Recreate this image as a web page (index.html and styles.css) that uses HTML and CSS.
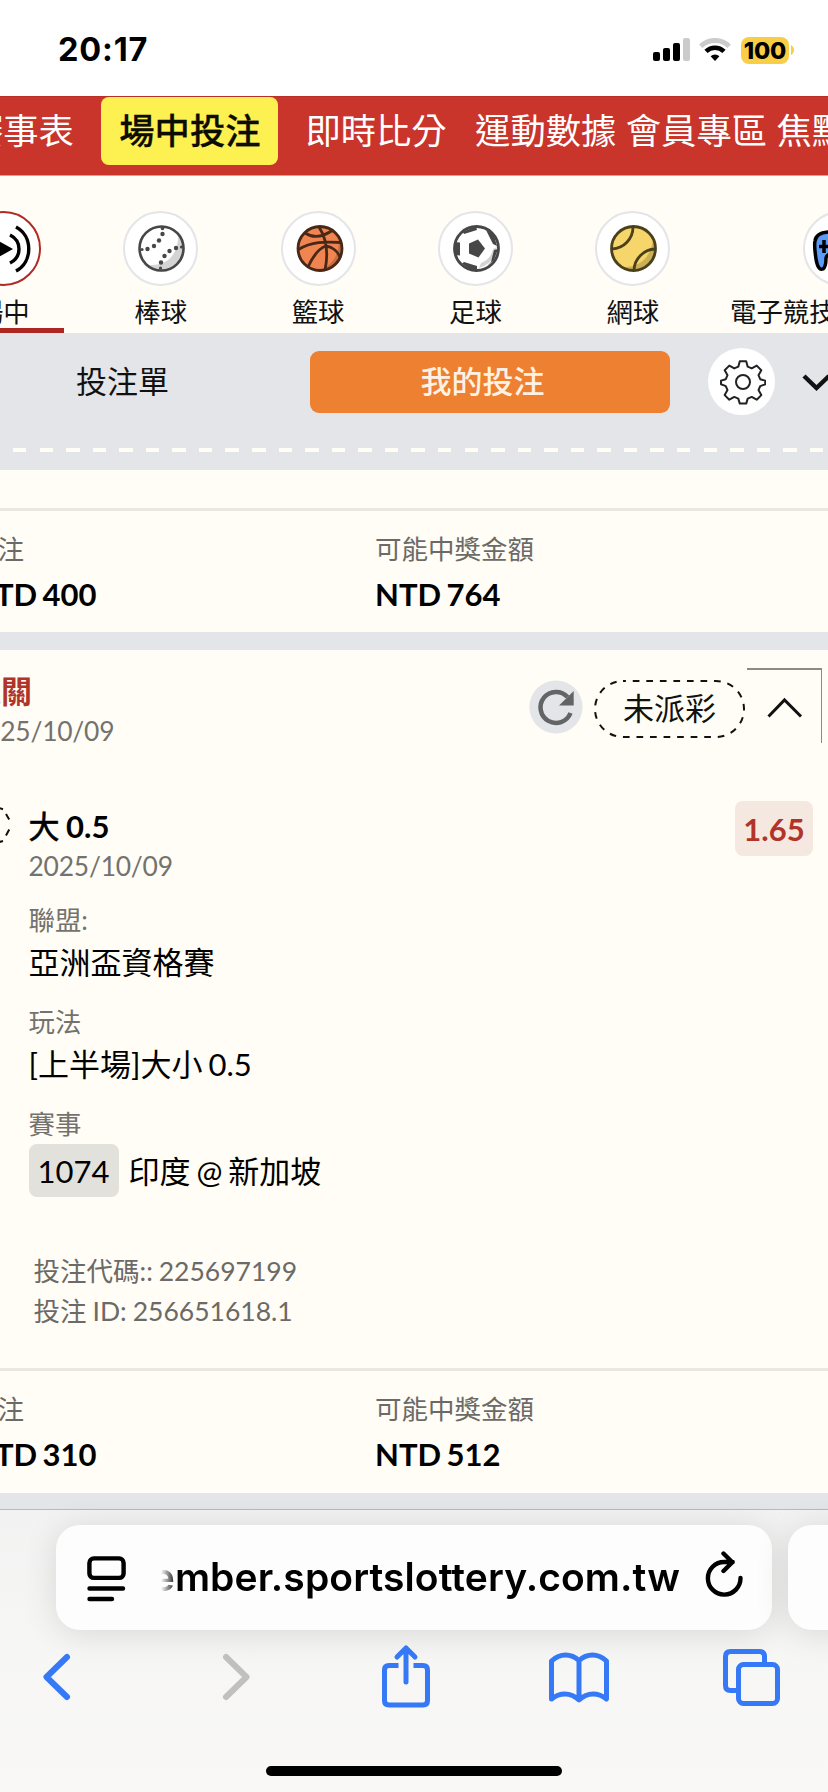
FILE: index.html
```html
<!DOCTYPE html>
<html lang="zh-Hant">
<head>
<meta charset="utf-8">
<title>場中投注</title>
<link rel="stylesheet" href="styles.css">
</head>
<body>
<div class="screen">
  <header class="status">
    <span class="time">20:17</span>
    <div class="status-icons">
      <svg class="signal" width="37" height="24" viewBox="0 0 37 24"><rect x="0" y="14" width="7" height="9" rx="2"/><rect x="10" y="10" width="7" height="13" rx="2"/><rect x="20" y="5" width="7" height="18" rx="2"/><rect x="30" y="0" width="7" height="23" rx="2" fill="#cbcbcb"/></svg>
      <svg class="wifi" width="32" height="24" viewBox="0 0 32 24" fill="none"><path d="M1.8 8.2a20.5 20.5 0 0 1 28.4 0" stroke="#cbcbcb" stroke-width="5"/><path d="M7 13.4a13 13 0 0 1 18 0" stroke="#000" stroke-width="4.6"/><path d="M11.6 18.2a6.4 6.4 0 0 1 8.8 0L16 23z" fill="#000"/></svg>
      <div class="battery"><span>100</span></div>
      <svg width="3" height="10" viewBox="0 0 3 10"><path d="M0 0c4 2 4 8 0 10z" fill="#f8ce46"/></svg>
    </div>
  </header>

  <nav class="nav">
    <span class="nav-item schedule">賽事表</span>
    <span class="nav-item active">場中投注</span>
    <span class="nav-item live">即時比分</span>
    <span class="nav-item stats">運動數據</span>
    <span class="nav-item member">會員專區</span>
    <span class="nav-item focus">焦點</span>
  </nav>

  <section class="sports">
    <div class="sport selected"><div class="disc">
      <svg width="75" height="75" viewBox="-34 211 75 75" fill="none" stroke="#000" stroke-width="3.4"><path d="M-10 236v26l23-13z" fill="#000" stroke="none"/><path d="M10 235c12 6 12 22 0 28M16 227c17 9 17 35 0 44"/></svg></div>
      <span class="sport-name">場中</span></div>
    <div class="sport"><div class="disc">
      <svg width="75" height="75" viewBox="0 0 75 75" fill="none"><circle cx="38.5" cy="37.500" r="21.500" fill="#fff"/><path d="M55 20a22 22 0 0 1-35 33c22 5 37-8 35-33z" fill="#d4d4d4"/><circle cx="38.500" cy="37.500" r="22" stroke="#474747" stroke-width="2.600"/><g fill="#474747"><circle cx="39.500" cy="17.500" r="1.800"/><circle cx="39.500" cy="23" r="2.200"/><circle cx="36" cy="29.500" r="2.200"/><circle cx="31" cy="35" r="2.200"/><circle cx="24.500" cy="38" r="2.200"/><circle cx="19" cy="38.500" r="1.600"/><circle cx="58.500" cy="36" r="1.600"/><circle cx="53" cy="37" r="2.200"/><circle cx="46.500" cy="40" r="2.200"/><circle cx="41.500" cy="45" r="2.200"/><circle cx="38" cy="51.500" r="2.200"/><circle cx="37.500" cy="57" r="1.600"/></g></svg></div>
      <span class="sport-name">棒球</span></div>
    <div class="sport"><div class="disc">
      <svg width="75" height="75" viewBox="0 0 75 75" fill="none" stroke="#482817" stroke-width="2.800"><circle cx="39" cy="37.500" r="21.800" fill="#f08551" stroke="none"/><path d="M58 26a22 22 0 0 1-26 33c16 0 27-12 26-33z" fill="#ca6d40" stroke="none"/><circle cx="39" cy="37.500" r="22"/><path d="M24 22c9 6 18 4 28-3M17.500 38.500c13-8 26-8 43-7M38 16c9 14 9 29 6 43M27 56c5-11 12-19 18-21 7 1 12 6 14 11"/></svg></div>
      <span class="sport-name">籃球</span></div>
    <div class="sport"><div class="disc">
      <svg width="75" height="75" viewBox="0 0 75 75"><circle cx="38.500" cy="37.500" r="21.500" fill="#fff"/><path d="M59 36q-2 16-18 21l2-5q10-4 12-14z" fill="#d4d4d4"/><circle cx="38.500" cy="37.500" r="22" fill="none" stroke="#474747" stroke-width="2.800"/><g fill="#474747"><path d="M31 32.500l9-4 7 9-6.500 9L31 42.500z"/><path d="M25 21l13-6 1 4-13 4zM48 19l8 5 3 11-4-2zM53 51l3-12 4-1-4 11-8 7zM26 51l13 4v4l-7-.5-8-6zM16 31l6 .5v13l-5-.5z"/></g></svg></div>
      <span class="sport-name">足球</span></div>
    <div class="sport"><div class="disc">
      <svg width="75" height="75" viewBox="0 0 75 75" fill="none"><circle cx="38.500" cy="37.500" r="21.800" fill="#f6d66a"/><path d="M58 27a22 22 0 0 1-30 29c17 1 29-11 30-29z" fill="#cbb055"/><path d="M17 38a22 22 0 0 0 21-22M39 59a22 22 0 0 1 21-21" stroke="#4a401b" stroke-width="2.800"/><circle cx="38.500" cy="37.500" r="22" stroke="#4a401b" stroke-width="2.800"/></svg></div>
      <span class="sport-name">網球</span></div>
    <div class="sport esports"><div class="disc">
      <svg width="75" height="75" viewBox="0 0 75 75" fill="#5b9cf8" stroke="#000"><path d="M25 21h25q10 0 12 12l3 20q1 8-5 6-5-2-7-12-2-4-7-4H29q-5 0-6 4 0 9-3 11-5 2-7-10-2-13-1-18 1-8 13-9z" stroke-width="3.500"/><path d="M21 29v13M16 35.500h12" stroke-width="3.500"/></svg></div>
      <span class="sport-name">電子競技</span></div>
  </section>

  <section class="slip-tabs">
    <div class="tab-row">
      <span class="tab">投注單</span>
      <span class="tab mine">我的投注</span>
      <div class="gear"><svg width="46" height="46" viewBox="0 0 46 46" fill="none" stroke="#222" stroke-width="2"><path d="M19.800 2.200h6.400l1.500 5.500 4 1.700 5-2.800 4.600 4.600-2.800 5 1.700 4 5 1.400v3.700l-5 1.800-1.700 4 2.800 5-4.600 4.600-5-2.800-4 1.700-1.500 5h-6.400l-1.500-5-4-1.700-5 2.800-4.600-4.600 2.800-5-1.700-4-4.800-1.800v-3.700l4.800-1.400 1.700-4-2.800-5 4.600-4.600 5 2.800 4-1.700z" stroke-linejoin="round"/><circle cx="23" cy="23" r="7"/></svg></div>
      <svg class="chev-down" width="30" height="20" viewBox="0 0 30 20" fill="none" stroke="#111" stroke-width="4.500"><path d="M2 3l12.500 12L27 3"/></svg>
    </div>
    <div class="dashes"></div>
  </section>

  <section class="card first">
    <div class="totals">
      <div class="total stake"><span class="label">投注</span><b class="amount">NTD 400</b></div>
      <div class="total"><span class="label">可能中獎金額</span><b class="amount">NTD 764</b></div>
    </div>
  </section>

  <section class="card">
    <div class="card-head">
      <div class="card-title"><b class="kind">過關</b><span class="date">2025/10/09</span></div>
      <svg class="refresh" width="54" height="54" viewBox="0 0 54 54"><circle cx="27" cy="27" r="26.600" fill="#e4e5e8"/><path d="M41.500 33A15.500 15.500 0 1 1 38.500 17" fill="none" stroke="#636466" stroke-width="4.500"/><path d="M44.700 11v14.500H30z" fill="#636466"/></svg>
      <div class="pill"><svg class="pill-line" width="151" height="58" viewBox="0 0 151 58" fill="none" stroke="#111" stroke-width="2"><rect x="1" y="1" width="149" height="56" rx="28" stroke-dasharray="6.700 6.850" stroke-dashoffset="3.800"/></svg><span>未派彩</span></div>
      <div class="toggle"><svg width="36" height="22" viewBox="0 0 36 22" fill="none" stroke="#111" stroke-width="3"><path d="M1.500 19.500L17.500 3l16.500 16.500"/></svg></div>
    </div>
    <div class="pick">
      <svg class="pick-ring" width="12" height="38" viewBox="0 0 12 38" fill="none" stroke="#111" stroke-width="2"><path d="M-1 2l4 1.200M6 8l3.200 5.500M9.200 23.500L6 29.500M3 35l-4 1.200"/></svg>
      <div class="pick-body">
        <div class="pick-name"><span class="han">大</span> 0.5</div>
        <div class="date">2025/10/09</div>
        <div class="field league">聯盟:</div><div class="value">亞洲盃資格賽</div>
        <div class="field">玩法</div><div class="value">[上半場]大小 0.5</div>
        <div class="field">賽事</div>
        <div class="match"><span class="code">1074</span><span>印度 @ 新加坡</span></div>
        <div class="ids"><div>投注代碼:: 225697199</div><div>投注 ID: 256651618.1</div></div>
      </div>
      <span class="odds">1.65</span>
    </div>
    <div class="totals">
      <div class="total stake"><span class="label">投注</span><b class="amount">NTD 310</b></div>
      <div class="total"><span class="label">可能中獎金額</span><b class="amount">NTD 512</b></div>
    </div>
  </section>

  <footer class="browser">
    <div class="address-row">
      <div class="address">
        <svg class="page-icon" width="39" height="46" viewBox="0 0 39 46" fill="none" stroke="#000" stroke-width="4.400" stroke-linecap="round"><rect x="2.400" y="2.400" width="34.200" height="19.500" rx="4.500"/><path d="M2.500 32.500h33.500M2.500 43h22.500"/></svg>
        <div class="url-clip"><span class="url">ember.sportslottery.com.tw</span></div>
        <svg class="reload" width="39" height="48" viewBox="0 0 39 48" fill="none" stroke="#000" stroke-width="4.400" stroke-linecap="round" stroke-linejoin="round"><path d="M35.500 27A16.300 16.300 0 1 1 19.200 11h8.500M18.500 2.500l8.800 8.700-8.800 8.800"/></svg>
      </div>
      <div class="next-tab"></div>
    </div>
    <div class="tools">
      <svg class="t-back" width="30" height="50" viewBox="0 0 30 50" fill="none" stroke="#3579f6" stroke-width="6" stroke-linecap="round" stroke-linejoin="round"><path d="M25 5L4.500 25 25 45"/></svg>
      <svg class="t-forward" width="30" height="50" viewBox="0 0 30 50" fill="none" stroke="#c0c0be" stroke-width="6" stroke-linecap="round" stroke-linejoin="round"><path d="M5 5l20.500 20L5 45"/></svg>
      <svg class="t-share" width="50" height="64" viewBox="0 0 50 64" fill="none" stroke="#3579f6" stroke-width="5" stroke-linecap="round" stroke-linejoin="round"><path d="M17.500 21.500H8q-4.500 0-4.500 4.500v30.500q0 4.500 4.500 4.500h34q4.500 0 4.500-4.500V26q0-4.500-4.500-4.500h-9.500" stroke-linecap="butt"/><path d="M25 38V4M16 13l9-9 9 9"/></svg>
      <svg class="t-book" width="60" height="52" viewBox="0 0 60 52" fill="none" stroke="#3579f6" stroke-width="5" stroke-linejoin="round"><path d="M30 8.500Q24 3 16.500 3T2.500 9v38q6-5 13.500-5T30 48q6.500-6 14-6t13.500 5V9Q51 3 43.500 3T30 8.500zV48"/></svg>
      <svg class="t-tabs" width="58" height="58" viewBox="0 0 58 58" fill="none" stroke="#3579f6" stroke-width="5"><path d="M41.500 13V7.500q0-5-5-5h-29q-5 0-5 5v29q0 5 5 5H14"/><rect x="15.500" y="15.500" width="39" height="39" rx="5"/></svg>
    </div>
    <div class="home-bar"></div>
  </footer>
</div>
</body>
</html>
```
FILE: styles.css
```css
* { box-sizing: border-box; }
body { margin: 0; }
svg { display: block; flex: none; }
.screen {
  width: 828px; height: 1792px; overflow: hidden;
  display: flex; flex-direction: column;
  background: #e4e5e8; color: #111;
  font: 31px/40px Lato, "Noto Sans CJK TC", sans-serif;
  font-variant-ligatures: none;
  word-spacing: -2px;
}

.status { height: 96px; flex: none; background: #fff; display: flex; justify-content: space-between; padding: 0 34px 0 58px; }
.time { font: 700 32.500px/40px Inter, sans-serif; letter-spacing: .8px; margin-top: 30px; color: #000; }
.status-icons { display: flex; align-items: center; height: 28px; margin-top: 36px; }
.wifi { margin-left: 9px; }
.battery { margin: 0 2px 0 10px; width: 48px; height: 27px; border-radius: 8px; background: #f8ce46; color: #000; font: 800 23.500px/27px Inter, sans-serif; text-align: center; letter-spacing: -.2px; }

.nav { height: 80px; flex: none; display: flex; background: #c9342b; border-bottom: 1px solid #e39a92; color: #fff; font-size: 35.300px; line-height: 67px; white-space: nowrap; border-top: 1px solid #b92f27; }
.nav-item { flex: none; height: 68px; }
.schedule { margin-left: -32px; }
.active { width: 177px; margin-left: 27.500px; text-align: center; border-radius: 8px; background: #fdf151; color: #0c0c00; font-weight: 500; -webkit-text-stroke: .3px #0c0c00; }
.live { margin-left: 27px; }
.stats { margin-left: 28.500px; }
.member, .focus { margin-left: 9.500px; }

.sports { height: 157px; flex: none; display: flex; background: #fffdf5; padding-top: 35px; margin-left: -75.300px; overflow: hidden; }
.sport { width: 157.400px; flex: none; display: flex; flex-direction: column; align-items: center; color: #111; }
.disc { width: 75px; height: 75px; flex: none; border-radius: 50%; background: #fff; border: 2px solid #e4e5e8; overflow: hidden; }
.disc svg { margin: -2px; }
.selected .disc { border-color: #b02a24; }
.sport-name { flex: none; font-size: 26.400px; line-height: 38px; padding-top: 7px; white-space: nowrap; }
.selected { border-bottom: 5px solid #ae2622; width: 139.300px; margin-right: 18px; padding-left: 18px; }
.esports { width: 220px; margin-left: 18.500px; align-items: flex-start; }
.esports .disc { margin-left: 72.500px; }

.slip-tabs { height: 137px; flex: none; padding-top: 15px; }
.tab-row { height: 67px; display: flex; align-items: center; }
.tab { width: 245px; text-align: center; flex: none; padding-bottom: 2px; }
.mine { margin-left: 64.500px; width: 360px; height: 62px; line-height: 61px; border-radius: 9px; background: #ed8031; color: #fff2e4; font-weight: 500; padding: 0 14px 0 0; }
.gear { width: 67px; height: 67px; flex: none; margin-left: 38px; border-radius: 50%; background: #fff; display: grid; place-items: center; padding-left: 3px; }
.chev-down { margin: 3px 0 0 27px; }
.dashes { height: 4px; margin: 33px 4px 0 13px; background: repeating-linear-gradient(90deg, #fffdf5 0 13.500px, transparent 13.500px 26.560px); }

.card { background: #fffdf5; flex: none; height: 843px; margin-bottom: 17px; }
.card.first { height: 162px; padding-top: 38px; margin-bottom: 18px; }
.totals { border-top: 3px solid #e9e8e2; display: flex; padding-top: 18px; }
.total { display: flex; flex-direction: column; white-space: nowrap; }
.stake { width: 404px; margin-left: -29px; flex: none; }
.label { font-size: 26.500px; color: #6b6a67; }
.amount { margin-top: 5px; color: #000; font-weight: 700; }
.date { font-size: 26.400px; color: #73726f; letter-spacing: -.2px; }

.card-head { height: 134px; display: flex; }
.card-title { width: 559px; margin-left: -30px; padding-top: 21px; display: flex; flex-direction: column; }
.kind { color: #b03427; }
.refresh { margin-top: 30px; }
.pill { position: relative; width: 151px; height: 58px; margin: 30px 0 0 11px; line-height: 56px; text-align: center; flex: none; }
.pill-line { position: absolute; inset: 0; }
.toggle { width: 75px; height: 75px; flex: none; margin: 18px 0 0 2px; border-top: 2px solid #8b8a83; border-right: 1px solid #8b8a83; padding: 27px 0 0 20px; }

.pick { display: flex; height: 584px; align-items: flex-start; white-space: nowrap; }
.pick-ring { margin-top: 22px; }
.pick-body { margin-left: 16.500px; padding-top: 22px; width: 706.500px; color: #000; }
.pick-name { font-weight: 700; word-spacing: -1px; }
.han { font-weight: 400; -webkit-text-stroke: .6px #000; }
.field { margin-top: 20px; font-size: 26.400px; color: #73726f; }
.league { margin-top: 14px; }
.value { margin-top: 2px; }
.match { display: flex; gap: 10px; line-height: 54px; }
.code { width: 90px; height: 53px; text-align: center; border-radius: 8px; background: #e3e1dc; }
.ids { margin: 53px 0 0 5px; font-size: 26.500px; color: #6b6a67; word-spacing: -.8px; }
.odds { width: 78px; height: 55px; margin-top: 17px; border-radius: 8px; background: #f5e8e0; color: #b03427; font-weight: 700; text-align: center; line-height: 56px; }

.browser { flex: none; height: 283px; margin-top: -1px; border-top: 1px solid #b9babc; background: linear-gradient(#f2f2f2, #f6f6f5 45%, #f9f8f6); }
.address-row { display: flex; gap: 16px; padding: 15px 0 0 56px; }
.address, .next-tab { height: 105px; border-radius: 24px; background: #fdfdfd; box-shadow: 0 4px 34px rgba(0, 0, 0, .12); flex: none; }
.address { width: 716px; display: flex; padding-left: 31px; }
.next-tab { width: 80px; }
.page-icon { margin-top: 31px; }
.url-clip { width: 519px; margin: 26px 0 0 35px; overflow: hidden; height: 56px; display: flex; justify-content: flex-end; -webkit-mask-image: linear-gradient(90deg, transparent, #000 16px); mask-image: linear-gradient(90deg, transparent, #000 16px); }
.url { font: 600 39px/52px Inter, sans-serif; letter-spacing: .1px; color: #000; }
.reload { margin: 26px 0 0 25px; }
.tools { display: flex; height: 64px; margin-top: 14px; }
.t-back { margin: 8px 0 0 42px; }
.t-forward { margin: 8px 0 0 149px; }
.t-share { margin: 0 0 0 130px; }
.t-book { margin: 8px 0 0 117.500px; }
.t-tabs { margin: 5px 0 0 114.500px; }
.home-bar { width: 296px; height: 10px; border-radius: 5px; background: #000; margin: 58px auto 0; }
```
